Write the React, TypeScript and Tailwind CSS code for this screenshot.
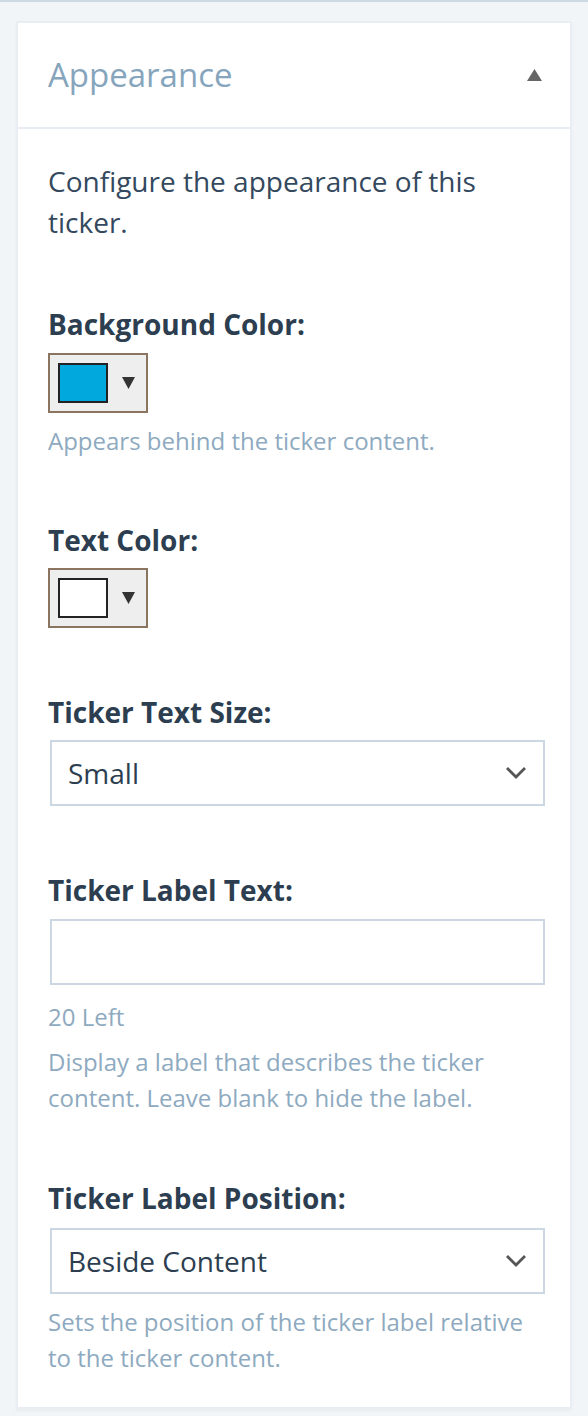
import React from "react";

const font = { fontFamily: '"Open Sans", "Noto Sans", sans-serif' };

function ColorPicker({ color }: { color: string }) {
  return (
    <div className="flex h-[60px] w-[100px] items-center border-2 border-[#8b7560] bg-[#eeeeee] pl-[8px]">
      <div
        className="h-[40px] w-[50px] border-2 border-[#222222]"
        style={{ backgroundColor: color }}
      />
      <svg width="13" height="12" viewBox="0 0 13 12" className="ml-[14px]">
        <polygon points="0,0 13,0 6.5,12" fill="#333333" />
      </svg>
    </div>
  );
}

function Select({ value }: { value: string }) {
  return (
    <div className="ml-[2px] flex h-[66px] w-[495px] items-center justify-between border-2 border-[#cbd8e3] bg-white pl-[16px] pr-[16px]">
      <span className="text-[28px] leading-[36px] text-[#2c3e50]">{value}</span>
      <svg width="22" height="14" viewBox="0 0 22 14">
        <polyline
          points="2,2 11,11 20,2"
          fill="none"
          stroke="#555555"
          strokeWidth="2.8"
        />
      </svg>
    </div>
  );
}

function Label({ children }: { children: React.ReactNode }) {
  return (
    <div className="text-[28px] font-bold leading-[32px] text-[#2c3e50]">
      {children}
    </div>
  );
}

function Help({ children }: { children: React.ReactNode }) {
  return (
    <div className="text-[24px] leading-[36px] text-[#8eaac0]">{children}</div>
  );
}

export default function App() {
  return (
    <div className="min-h-[1416px] w-[588px] bg-[#f1f5f8]" style={font}>
      <div className="h-[2px] bg-[#ccd8e2]" />
      <div className="mx-[16px] mt-[19px] border-2 border-[#e8eef3] bg-white shadow-[0_2px_3px_rgba(0,0,0,0.04)]">
        <div className="flex h-[106px] items-center justify-between border-b-2 border-[#e8eef3] pl-[30px] pr-[28px]">
          <h2 className="text-[33px] leading-[40px] text-[#86a5bd]">
            Appearance
          </h2>
          <svg width="15" height="12" viewBox="0 0 15 12">
            <polygon points="0,12 15,12 7.5,0" fill="#666666" />
          </svg>
        </div>
        <div className="px-[30px] pb-[31px] pt-[32px]">
          <p className="text-[28px] leading-[41px] text-[#34495e]">
            Configure the appearance of this ticker.
          </p>

          <div className="mt-[65px]">
            <Label>Background Color:</Label>
          </div>
          <div className="mt-[13px]">
            <ColorPicker color="#00a8de" />
          </div>
          <div className="mt-[10px]">
            <Help>Appears behind the ticker content.</Help>
          </div>

          <div className="mt-[65px]">
            <Label>Text Color:</Label>
          </div>
          <div className="mt-[12px]">
            <ColorPicker color="#ffffff" />
          </div>

          <div className="mt-[68px]">
            <Label>Ticker Text Size:</Label>
          </div>
          <div className="mt-[12px]">
            <Select value="Small" />
          </div>

          <div className="mt-[68px]">
            <Label>Ticker Label Text:</Label>
          </div>
          <div className="mt-[13px]">
            <div className="ml-[2px] h-[66px] w-[495px] border-2 border-[#cbd8e3] bg-white" />
          </div>
          <div className="mt-[14px]">
            <Help>20 Left</Help>
          </div>
          <div className="mt-[9px]">
            <Help>
              Display a label that describes the ticker content. Leave blank
              to hide the label.
            </Help>
          </div>

          <div className="mt-[66px]">
            <Label>Ticker Label Position:</Label>
          </div>
          <div className="mt-[14px]">
            <Select value="Beside Content" />
          </div>
          <div className="mt-[10px]">
            <Help>
              Sets the position of the ticker label relative to the ticker
              content.
            </Help>
          </div>
        </div>
      </div>
    </div>
  );
}
